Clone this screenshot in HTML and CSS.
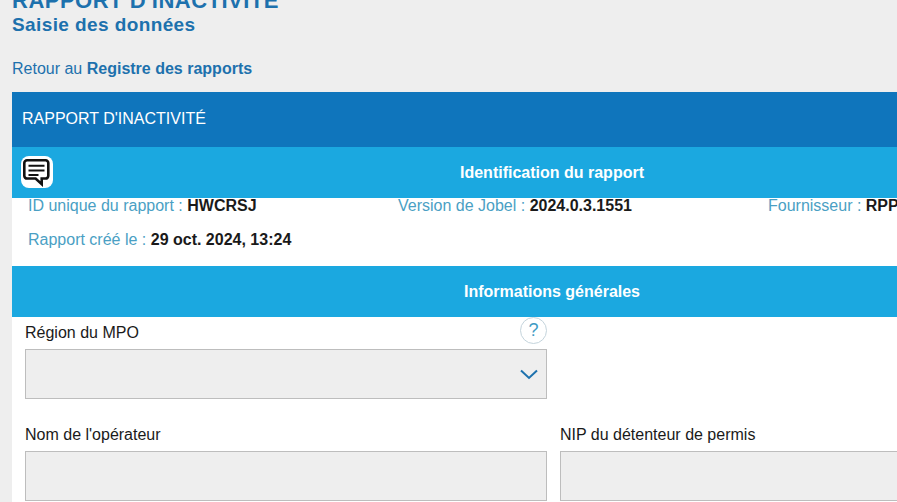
FILE: index.html
```html
<!DOCTYPE html>
<html lang="fr">
<head>
    <meta charset="UTF-8">
    <title>Rapport d'inactivité</title>
    <link rel="stylesheet" href="styles.css">
</head>
<body>
    <div class="page">
        <h1>RAPPORT D'INACTIVITÉ</h1>
        <h2>Saisie des données</h2>
        <p class="back">Retour au <a href="#">Registre des rapports</a></p>

        <div class="report-title">RAPPORT D'INACTIVITÉ</div>

        <div class="section-bar section-bar-id">
            <button class="notes-button" title="Notes">
                <svg xmlns="http://www.w3.org/2000/svg" viewBox="0 0 28 30" width="28" height="30" fill="none" stroke="#111">
                    <path d="M4 3.300h18.600a2.700 2.700 0 0 1 2.700 2.700v12.800a2.700 2.700 0 0 1-2.700 2.700h-3.900v5.600l-6.100-5.600h-8.600a2.700 2.700 0 0 1-2.700-2.700v-12.800a2.700 2.700 0 0 1 2.700-2.700z" stroke-width="2.600"/>
                    <path d="M5.500 8.700h16M5.500 13.500h16M5.500 18h10" stroke-width="2"/>
                </svg>
            </button>
            Identification du rapport
        </div>
        <div class="report-info">
            <div class="info-row">
                <span class="info-item">ID unique du rapport : <b>HWCRSJ</b></span>
                <span class="info-item">Version de Jobel : <b>2024.0.3.1551</b></span>
                <span class="info-item">Fournisseur : <b>RPPS</b></span>
            </div>
            <div class="info-row">
                <span class="info-item">Rapport créé le : <b>29 oct. 2024, 13:24</b></span>
            </div>
        </div>

        <div class="section-bar">Informations générales</div>
        <div class="form">
            <div class="field">
                <div class="field-label">
                    <label>Région du MPO</label>
                    <span class="help">?</span>
                </div>
                <div class="input select">
                    <svg xmlns="http://www.w3.org/2000/svg" viewBox="0 0 18 11" width="18" height="11" fill="none" stroke="#1d71ad" stroke-width="2">
                        <path d="M1 1.500l8 7.500 8-7.500"/>
                    </svg>
                </div>
            </div>
            <div class="field"></div>
            <div class="field">
                <div class="field-label"><label>Nom de l'opérateur</label></div>
                <div class="input"></div>
            </div>
            <div class="field">
                <div class="field-label"><label>NIP du détenteur de permis</label></div>
                <div class="input"></div>
            </div>
        </div>
    </div>
</body>
</html>
```

FILE: styles.css
```css
* {
    margin: 0;
    padding: 0;
    box-sizing: border-box;
}

html, body {
    height: 100%;
    overflow: hidden;
}

body {
    font-family: "Liberation Sans", Arial, sans-serif;
    background: #eeeeee;
    color: #1a1a1a;
}

.page {
    width: 1080px;
    margin-left: 12px;
}

h1 {
    margin-top: -11px;
    color: #1d71ad;
    font-size: 22px;
    line-height: 24px;
    font-weight: 700;
    letter-spacing: 0.5px;
}

h2 {
    margin-top: 1px;
    color: #1d71ad;
    font-size: 19px;
    line-height: 22px;
    font-weight: 700;
    letter-spacing: 0.4px;
}

.back {
    margin-top: 23px;
    color: #1d71ad;
    font-size: 16px;
    line-height: 20px;
}

.back a {
    color: #1d71ad;
    font-weight: 700;
    text-decoration: none;
}

.report-title {
    margin-top: 13px;
    height: 55px;
    padding-left: 10px;
    background: #0f75bc;
    color: white;
    font-size: 16px;
    line-height: 53px;
}

.section-bar {
    position: relative;
    height: 51px;
    background: #1ba8e0;
    color: white;
    font-size: 16px;
    font-weight: 700;
    line-height: 51px;
    text-align: center;
}

.notes-button {
    position: absolute;
    left: 9px;
    top: 9px;
    width: 32px;
    height: 32px;
    display: flex;
    align-items: center;
    justify-content: center;
    background: white;
    border: none;
    border-radius: 8px;
}

.report-info {
    height: 68px;
    padding-left: 16px;
    background: white;
    font-size: 16px;
    color: #4a9fc4;
}

.info-row {
    display: flex;
    height: 34px;
    line-height: 16px;
}

.info-item {
    flex-shrink: 0;
    width: 370px;
    white-space: nowrap;
}

.info-row b {
    color: #1a1a1a;
}

.form {
    display: grid;
    grid-template-columns: 522px 522px;
    column-gap: 13px;
    row-gap: 20px;
    padding: 0 13px;
    height: 400px;
    align-content: start;
    background: white;
}

.field-label {
    display: flex;
    align-items: center;
    justify-content: space-between;
    height: 32px;
    font-size: 16px;
}

.help {
    width: 27px;
    height: 27px;
    margin-bottom: 6px;
    display: flex;
    align-items: center;
    justify-content: center;
    border: 1px solid #c4d4dc;
    border-radius: 50%;
    color: #3f9bc4;
    font-size: 18px;
}

.input {
    height: 50px;
    background: #eeeeee;
    border: 1px solid #bdbdbd;
}

.select {
    display: flex;
    align-items: center;
    justify-content: flex-end;
    padding-right: 8px;
}
```
